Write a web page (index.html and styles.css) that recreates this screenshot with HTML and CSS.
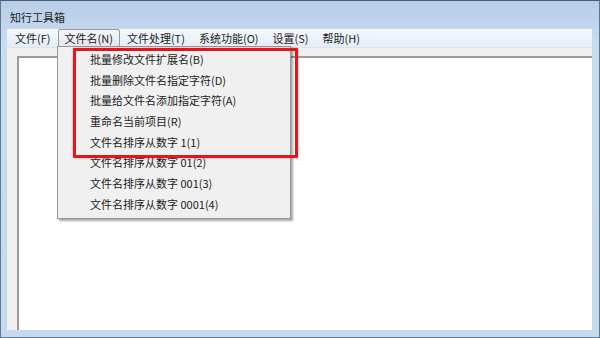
FILE: index.html
```html
<!DOCTYPE html>
<html>
  <head>
  <meta charset="utf-8">
  <title>知行工具箱</title>
  <link rel="stylesheet" href="styles.css">
  </head>
  <body>
    <div class="ventana">
      <div class="titulo">知行工具箱</div>
      <div class="cliente">
        <div class="menubar">
          <span class="menu">文件(F)</span>
          <span class="menu activo">文件名(N)</span>
          <span class="menu">文件处理(T)</span>
          <span class="menu">系统功能(O)</span>
          <span class="menu">设置(S)</span>
          <span class="menu">帮助(H)</span>
        </div>
        <div class="zona">
          <div class="lista"></div>
        </div>
      </div>

      <!-- desplegable del menu "文件名" -->
      <div class="desplegable">
        <div class="item">批量修改文件扩展名(B)</div>
        <div class="item">批量删除文件名指定字符(D)</div>
        <div class="item">批量给文件名添加指定字符(A)</div>
        <div class="item">重命名当前项目(R)</div>
        <div class="item">文件名排序从数字 1(1)</div>
        <div class="item">文件名排序从数字 01(2)</div>
        <div class="item">文件名排序从数字 001(3)</div>
        <div class="item">文件名排序从数字 0001(4)</div>
      </div>
      <div class="marcaRoja"></div>
    </div>
  </body>
</html>
```

FILE: styles.css
```css
body{
  margin: 0;
  font-family: "Noto Sans CJK SC", "DejaVu Sans", sans-serif;
  color: #1b1b1b;
}

.ventana{
  position: relative;
  width: 600px;
  height: 338px;
  box-sizing: border-box;
  display: flex;
  flex-direction: column;
  border: 1px solid #5d7894;
  border-top-color: #4b5d72;
  background: linear-gradient(to bottom, #b7cde8, #c9dbef 40px, #c5d9ef);
}

.titulo{
  height: 28px;
  padding-left: 9px;
  font-size: 11px;
  line-height: 32px;
  color: #1e1e1e;
}

.cliente{
  flex: 1;
  display: flex;
  flex-direction: column;
  margin: 0 7px 7px 6px;
  background: #f0f0f0;
}

.menubar{
  height: 18px;
  display: flex;
  align-items: flex-start;
  padding-left: 1px;
  font-size: 11px;
  background: linear-gradient(to bottom, #f7f9fd, #e4ecf6);
  border-bottom: 1px solid #dce3ec;
}

.menu{
  padding: 0 6px;
  line-height: 16px;
  border: 1px solid transparent;
}

.menu.activo{
  border-color: #9a9a9a;
  border-radius: 2px;
  background: linear-gradient(to bottom, #f4f6f9, #e4e8ee);
}

.zona{
  flex: 1;
  display: flex;
  padding: 8px 0 0 10px;
}

.lista{
  flex: 1;
  background: white;
  border-top: 2px solid #9b9b9b;
  border-left: 2px solid #9b9b9b;
}

.desplegable{
  position: absolute;
  top: 45px;
  left: 56px;
  width: 232px;
  padding: 2px 0 3px 0;
  background: #f0f0f0;
  border: 1px solid #979797;
  box-shadow: 2px 2px 2px rgba(0, 0, 0, 0.35);
  font-size: 11px;
}

.item{
  height: 20.7px;
  line-height: 20.7px;
  padding-left: 32px;
}

.marcaRoja{
  position: absolute;
  top: 47px;
  left: 72px;
  width: 219px;
  height: 104px;
  border: 3px solid #e3161a;
  border-radius: 1px;
  box-shadow: 0 0 2px rgba(200, 20, 20, 0.5);
}
```
